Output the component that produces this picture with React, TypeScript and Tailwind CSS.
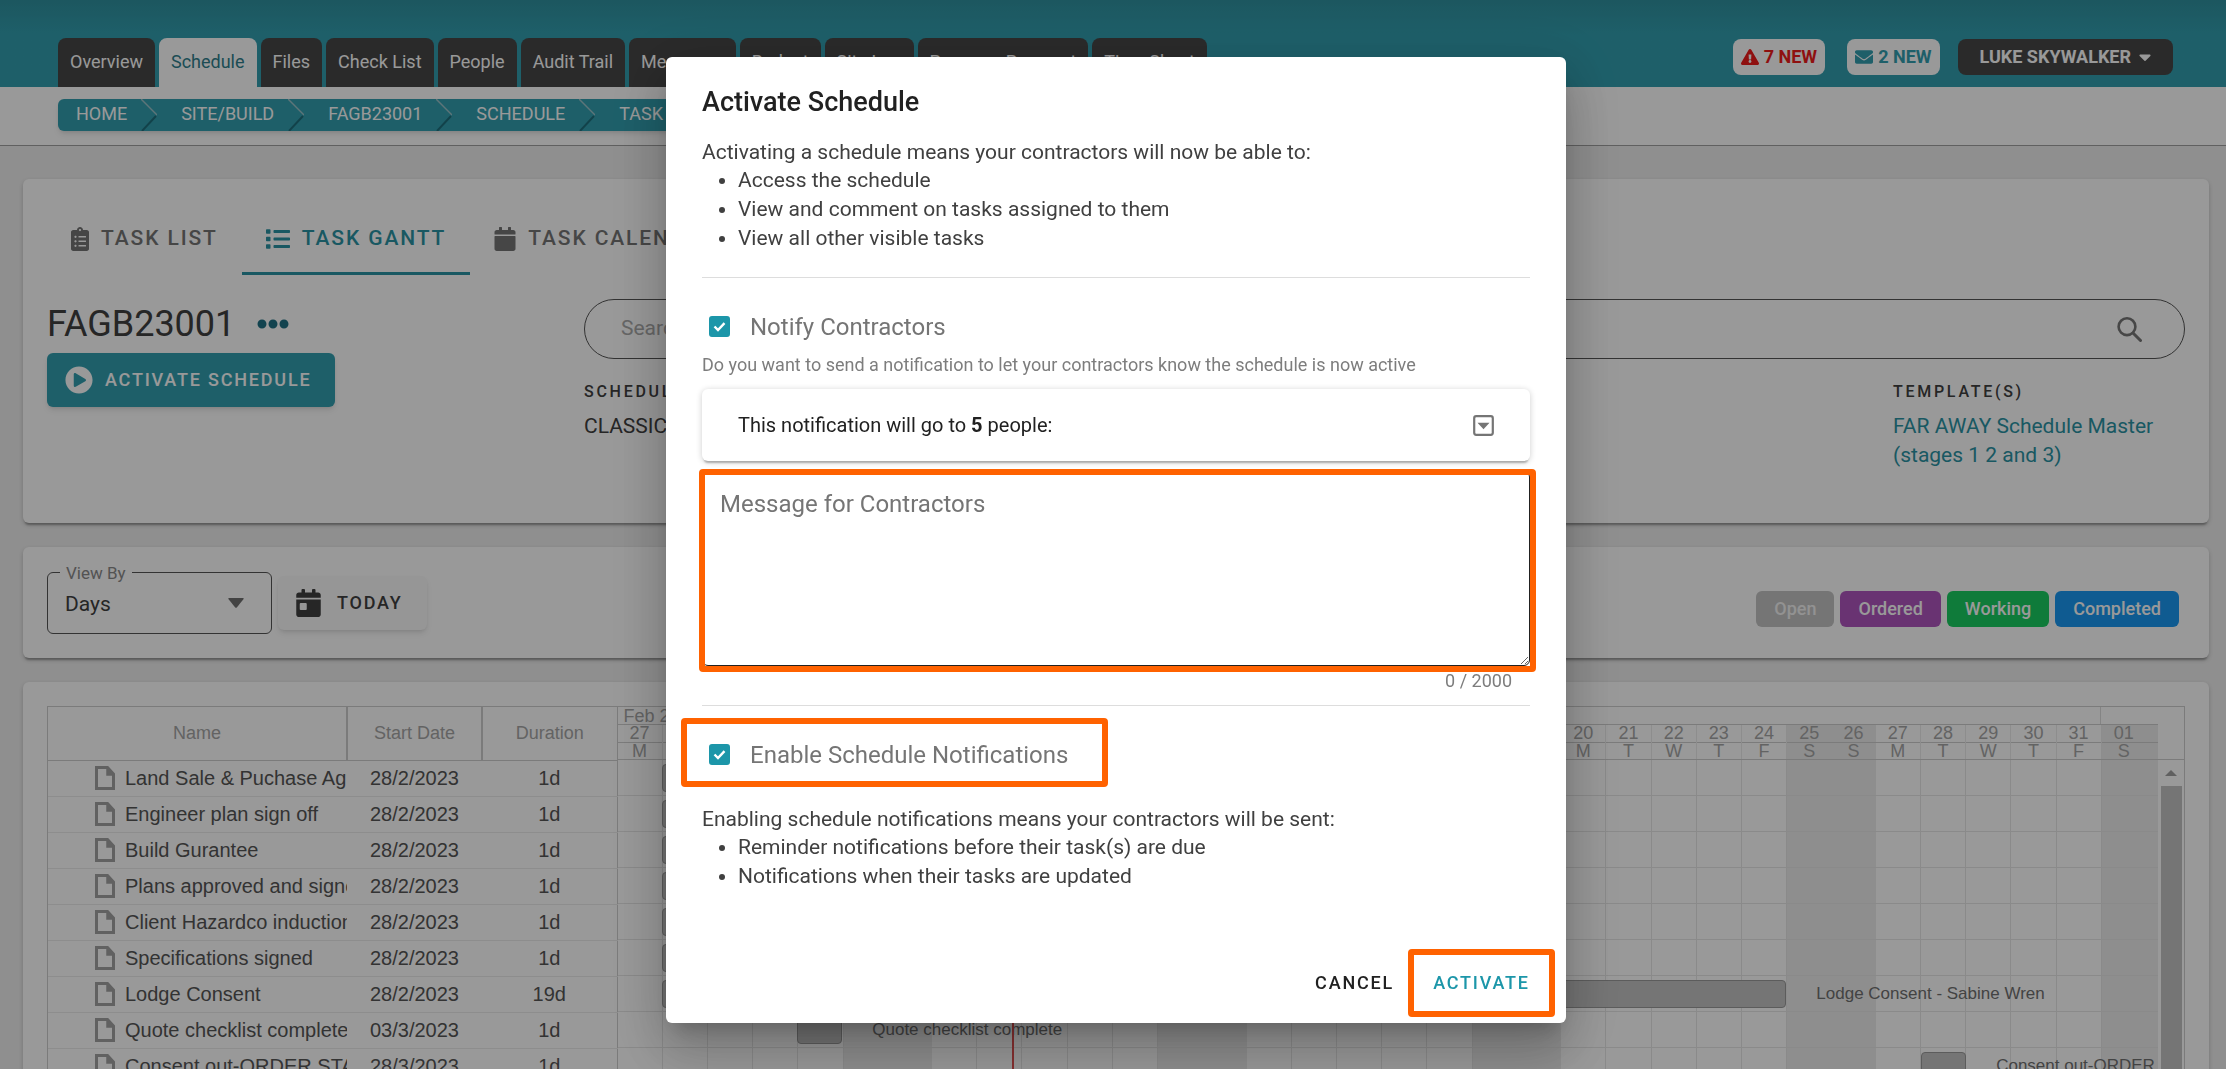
import { useState } from 'react'
import type { ReactNode } from 'react'
import {
  FaCalendar,
  FaCalendarDay,
  FaCaretDown,
  FaClipboardList,
  FaEllipsisH,
  FaEnvelope,
  FaExclamationTriangle,
  FaList,
  FaPlayCircle,
} from 'react-icons/fa'

const TABS = [
  'Overview', 'Schedule', 'Files', 'Check List', 'People', 'Audit Trail',
  'Messages', 'Budget', 'Site Log', 'Progress Payment', 'Time Sheet',
]

const CRUMBS = ['HOME', 'SITE/BUILD', 'FAGB23001', 'SCHEDULE', 'TASK GANTT']

const STATUSES = [
  { label: 'Open', className: 'bg-[#c3c3c3] text-[#f4f4f4]' },
  { label: 'Ordered', className: 'bg-[#b056be] text-white' },
  { label: 'Working', className: 'bg-[#19cd62] text-white' },
  { label: 'Completed', className: 'bg-[#1998f2] text-white' },
]

interface Task {
  name: string
  start: string
  duration: string
  /** Column of the first day, 0 = 27 Feb. */
  from: number
  /** Calendar days covered by the bar. */
  days: number
  label: string
}

const TASKS: Task[] = [
  { name: 'Land Sale & Puchase Agreement', start: '28/2/2023', duration: '1d', from: 1, days: 1, label: 'Land Sale & Puchase Agreement' },
  { name: 'Engineer plan sign off', start: '28/2/2023', duration: '1d', from: 1, days: 1, label: 'Engineer plan sign off' },
  { name: 'Build Gurantee', start: '28/2/2023', duration: '1d', from: 1, days: 1, label: 'Build Gurantee' },
  { name: 'Plans approved and signed', start: '28/2/2023', duration: '1d', from: 1, days: 1, label: 'Plans approved and signed' },
  { name: 'Client Hazardco induction', start: '28/2/2023', duration: '1d', from: 1, days: 1, label: 'Client Hazardco induction' },
  { name: 'Specifications signed', start: '28/2/2023', duration: '1d', from: 1, days: 1, label: 'Specifications signed' },
  { name: 'Lodge Consent', start: '28/2/2023', duration: '19d', from: 1, days: 25, label: 'Lodge Consent - Sabine Wren' },
  { name: 'Quote checklist complete', start: '03/3/2023', duration: '1d', from: 4, days: 1, label: 'Quote checklist complete' },
  { name: 'Consent out-ORDER STAGE 1', start: '28/3/2023', duration: '1d', from: 29, days: 1, label: 'Consent out-ORDER STAGE 1' },
]

// 27 Feb to 1 Apr
const DAYS = Array.from({ length: 34 }, (_, i) => {
  const d = new Date(2023, 1, 27 + i)
  return {
    date: String(d.getDate()).padStart(2, '0'),
    letter: 'SMTWTFS'[d.getDay()],
    weekend: d.getDay() === 0 || d.getDay() === 6,
  }
})

const TODAY_COLUMN = 8.78

function pct(columns: number): string {
  return `${(columns / DAYS.length) * 100}%`
}

export default function App() {
  const [open, setOpen] = useState(true)

  return (
    <div className="h-screen overflow-hidden bg-[#eeeeee] font-['Roboto',sans-serif] text-[#404040]">
      <Header />
      <Breadcrumbs />
      <main className="flex flex-col gap-6 pt-[33px] pr-[17px] pl-[23px]">
        <SchedulePanel onActivate={() => setOpen(true)} />
        <Toolbar />
        <Gantt />
      </main>
      {open && <ActivateDialog onClose={() => setOpen(false)} />}
    </div>
  )
}

function Header() {
  return (
    <header className="flex h-[87px] items-end justify-between bg-linear-to-b from-[#30919f] to-[#329fb0] to-40% pr-[53px] pl-[58px]">
      <nav className="flex gap-1">
        {TABS.map((tab) => (
          <a
            key={tab}
            href="#"
            className={
              tab === 'Schedule'
                ? 'h-[49px] rounded-t-lg bg-white px-3 pt-2.5 text-lg text-[#2f7f8d]'
                : 'h-[49px] rounded-t-lg bg-[#474747] px-3 pt-2.5 text-lg text-white'
            }
          >
            {tab}
          </a>
        ))}
      </nav>
      <div className="flex pb-3 text-lg font-bold">
        <button type="button" className="mr-[22px] flex h-9 items-center gap-[5px] rounded-lg bg-white px-2 text-[#ee1c1c]">
          <FaExclamationTriangle className="h-[18px] w-[18px]" />
          7 NEW
        </button>
        <button type="button" className="mr-[18px] flex h-9 items-center gap-[5px] rounded-lg bg-white px-2 text-[#329fb0]">
          <FaEnvelope className="h-[18px] w-[18px]" />
          2 NEW
        </button>
        <button type="button" className="flex h-9 items-center gap-2 rounded-lg bg-[#474747] px-[22px] text-white">
          LUKE SKYWALKER
          <FaCaretDown className="h-5 w-3" />
        </button>
      </div>
    </header>
  )
}

function Breadcrumbs() {
  return (
    <div className="flex h-[59px] items-start border-b border-[#a0a0a0] bg-white pt-3 pl-[58px]">
      <nav aria-label="Breadcrumb" className="flex h-8 items-center rounded-md bg-[#329fb0] px-[18px] text-lg text-white shadow-md">
        {CRUMBS.map((crumb, i) => (
          <span key={crumb} className="flex items-center">
            {i > 0 && (
              <svg className="mr-6 ml-3.5 h-8 w-4" viewBox="0 0 16 32" fill="none">
                <path d="M0 0L16 16" stroke="#9bc3ca" strokeWidth={1.5} />
                <path d="M15 17L1 32" stroke="#1f6f7c" strokeWidth={2} />
              </svg>
            )}
            <a href="#" className="pb-0.5">{crumb}</a>
          </span>
        ))}
      </nav>
    </div>
  )
}

function Card({ className, children }: { className: string; children: ReactNode }) {
  return (
    <section className={`rounded-md bg-white shadow-[0_4px_2px_-2px_rgba(0,0,0,0.25),0_2px_4px_rgba(0,0,0,0.2)] ${className}`}>
      {children}
    </section>
  )
}

function SchedulePanel({ onActivate }: { onActivate: () => void }) {
  return (
    <Card className="h-[344px] px-6 pt-[27px]">
      <nav className="flex text-[21px] font-medium tracking-[0.09em] text-[#757575]">
        <a href="#" className="flex h-[69px] items-center gap-3 border-b-3 border-transparent px-6">
          <FaClipboardList className="h-6 w-[18px]" />
          TASK LIST
        </a>
        <a href="#" className="flex h-[69px] items-center gap-3 border-b-3 border-[#2b93a4] px-6 text-[#2b93a4]">
          <FaList className="h-6 w-6" />
          TASK GANTT
        </a>
        <a href="#" className="flex h-[69px] items-center gap-3 border-b-3 border-transparent px-6">
          <FaCalendar className="h-6 w-[22px]" />
          TASK CALENDAR
        </a>
      </nav>
      <div className="flex pt-6">
        <div className="w-[537px] shrink-0">
          <div className="flex h-12 items-center gap-[22px] pt-0.5">
            <h1 className="text-4xl">FAGB23001</h1>
            <button type="button" aria-label="More" className="text-[#1f7184]">
              <FaEllipsisH className="h-8 w-8" />
            </button>
          </div>
          <button
            type="button"
            onClick={onActivate}
            className="mt-1.5 flex h-[54px] items-center gap-3 rounded-md bg-[#329fb0] pr-6 pl-[18px] text-lg font-medium tracking-widest text-white shadow-md"
          >
            <FaPlayCircle className="h-7 w-7" />
            ACTIVATE SCHEDULE
          </button>
        </div>
        <div className="flex-1">
          <label className="flex h-[60px] items-center rounded-full border border-[#555555] pr-[42px] pl-9">
            <span className="sr-only">Search</span>
            <input type="search" placeholder="Search" className="flex-1 text-[21px] outline-none placeholder:text-[#aaaaaa]" />
            <SearchIcon />
          </label>
          <div className="flex justify-between pt-[21px] text-[21px]/[29px]">
            <div>
              <h2 className="text-base/6 font-medium tracking-[0.17em]">SCHEDULE TYPE</h2>
              <p className="pt-2">CLASSIC</p>
            </div>
            <div className="w-[292px]">
              <h2 className="text-base/6 font-medium tracking-[0.17em]">TEMPLATE(S)</h2>
              <a href="#" className="block pt-2 text-[#2b93a4]">FAR AWAY Schedule Master (stages 1 2 and 3)</a>
            </div>
          </div>
        </div>
      </div>
    </Card>
  )
}

function Toolbar() {
  return (
    <Card className="flex h-[111px] items-center justify-between pr-[30px] pl-6">
      <div className="flex items-center gap-1.5">
        <div className="relative flex h-[62px] w-[225px] items-center rounded-md border border-[#555555]">
          <label htmlFor="view-by" className="absolute -top-3 left-3 bg-white px-1.5 text-[17px]/6 text-[#8a8a8a]">
            View By
          </label>
          <select id="view-by" className="w-full appearance-none px-[17px] pt-1 text-[21px] outline-none">
            <option>Days</option>
            <option>Weeks</option>
            <option>Months</option>
          </select>
          <svg className="pointer-events-none absolute right-[27px] h-2.5 w-4" viewBox="0 0 16 10" fill="#707070">
            <path d="M1 0h14q1 0 .6 1L9 9.300q-1 1-2 0L.4 1Q0 0 1 0z" />
          </svg>
        </div>
        <button
          type="button"
          className="flex h-[54px] items-center gap-4 rounded-md bg-[#fafafa] pr-6 pl-[18px] text-lg font-medium tracking-widest shadow-md"
        >
          <FaCalendarDay className="h-7 w-[25px]" />
          TODAY
        </button>
      </div>
      <div className="flex gap-1.5 pt-3">
        {STATUSES.map((s) => (
          <button key={s.label} type="button" className={`h-9 rounded-md px-[18px] text-lg font-medium ${s.className}`}>
            {s.label}
          </button>
        ))}
      </div>
    </Card>
  )
}

function Gantt() {
  return (
    <Card className="px-6 py-6">
      <div className="flex border border-[#cecece] font-['Liberation_Sans',Arial,sans-serif]">
        <table className="w-[569px] shrink-0 table-fixed border-r border-[#cecece]">
          <thead>
            <tr className="h-[53px] border-b border-[#cecece] text-lg text-[#a6a6a6]">
              <th className="w-[299px] border-r-2 border-[#cecece] font-normal">Name</th>
              <th className="w-[135px] border-r-2 border-[#cecece] font-normal">Start Date</th>
              <th className="w-[135px] font-normal">Duration</th>
            </tr>
          </thead>
          <tbody>
            {TASKS.map((task) => (
              <tr key={task.name} className="h-9 border-b border-[#ebebeb] text-xl text-[#555555]">
                <td className="overflow-hidden whitespace-nowrap">
                  <div className="flex items-center gap-2.5 pl-[47px]">
                    <FileIcon />
                    {task.name}
                  </div>
                </td>
                <td className="text-center">{task.start}</td>
                <td className="text-center">{task.duration}</td>
              </tr>
            ))}
          </tbody>
        </table>
        <Timeline />
        <div className="flex w-[26px] flex-col items-center">
          <div className="h-[53px] w-full border-b border-[#cecece]" />
          <svg className="my-2.5 h-1.5 w-3" viewBox="0 0 12 6" fill="#a0a0a0">
            <path d="M6 0l6 6H0z" />
          </svg>
          <div className="w-[21px] flex-1 bg-[#c3c3c3]" />
        </div>
      </div>
    </Card>
  )
}

function Timeline() {
  return (
    <div className="relative min-w-0 flex-1 overflow-hidden">
      <div className="flex h-[18px] border-b border-[#cecece] pr-3 text-lg/[18px] text-[#a6a6a6]">
        <div className="flex-2 border-r border-[#dddddd] pl-1.5 whitespace-nowrap">Feb 2023</div>
        <div className="flex-31 border-r border-[#dddddd] pl-1.5">Mar 2023</div>
        <div className="flex-1" />
      </div>
      <div className="flex h-[35px] border-b border-[#cecece] text-center text-lg/[17px] text-[#a6a6a6]">
        {DAYS.map((day, i) => (
          <div key={i} className={`flex-1 ${day.weekend ? 'bg-[#ededed]' : 'border-r border-[#ebebeb]'}`}>
            <div className="border-b border-[#cecece]">{day.date}</div>
            <div>{day.letter}</div>
          </div>
        ))}
        <div className="w-3 bg-[#ededed]">
          <div className="h-[18px] border-b border-[#cecece]" />
        </div>
      </div>
      <div className="relative">
        {TASKS.map((task) => (
          <div key={task.name} className="flex h-9 border-b border-[#e6e6e6]">
            <div className="relative flex flex-1">
              {DAYS.map((day, i) => (
                <div key={i} className={`flex-1 ${day.weekend ? 'bg-[#ededed]' : 'border-r border-[#e6e6e6]'}`} />
              ))}
              <div
                className="absolute top-1 h-7 rounded-sm border border-[#9a9a9a] bg-[#c3c3c3]"
                style={{ left: pct(task.from), width: pct(task.days) }}
              />
              <span
                className="absolute top-1 pl-[30px] text-[17px]/7 whitespace-nowrap text-[#707070]"
                style={{ left: pct(task.from + task.days) }}
              >
                {task.label}
              </span>
            </div>
            <div className="w-3 bg-[#ededed]" />
          </div>
        ))}
        <div className="absolute inset-y-0 right-3 left-0">
          <div className="absolute inset-y-0 w-0.5 bg-[#e05050]" style={{ left: pct(TODAY_COLUMN) }} />
        </div>
      </div>
    </div>
  )
}

function ActivateDialog({ onClose }: { onClose: () => void }) {
  const [message, setMessage] = useState('')

  return (
    <div className="fixed inset-0 flex items-start justify-center bg-black/40 pt-[57px] pl-1.5">
      <div
        role="dialog"
        aria-modal="true"
        aria-labelledby="activate-title"
        className="w-[900px] rounded-md bg-white px-9 pt-[25px] pb-1.5 text-[21px]/[29px] text-[#404040] shadow-[0_14px_19px_-9px_rgba(0,0,0,0.2),0_31px_49px_4px_rgba(0,0,0,0.14),0_12px_59px_10px_rgba(0,0,0,0.12)]"
      >
        <h2 id="activate-title" className="text-[27px]/10 font-medium text-[#212121]">
          Activate Schedule
        </h2>
        <p className="pt-4 leading-7">Activating a schedule means your contractors will now be able to:</p>
        <ul className="list-disc pl-9">
          <li>Access the schedule</li>
          <li>View and comment on tasks assigned to them</li>
          <li>View all other visible tasks</li>
        </ul>
        <hr className="mt-6 border-[#dddddd]" />

        <div className="pt-8 pl-[7px]">
          <Checkbox id="notify" label="Notify Contractors" />
        </div>
        <p className="pt-1.5 text-lg/8 text-[#7d7d7d]">
          Do you want to send a notification to let your contractors know the schedule is now active
        </p>
        <button
          type="button"
          className="mt-2 flex h-[72px] w-full items-center justify-between rounded-md px-9 text-xl text-[#212121] shadow-[0_4px_2px_-2px_rgba(0,0,0,0.25),0_1px_6px_rgba(0,0,0,0.2)]"
        >
          <span>
            This notification will go to <b>5</b> people:
          </span>
          <svg className="h-[21px] w-[21px]" viewBox="0 0 21 21" fill="none">
            <rect x="1.200" y="1.200" width="18.600" height="18.600" rx="2" stroke="#757575" strokeWidth={2.2} />
            <path d="M4.500 7.800h12l-6 6.500z" fill="#757575" />
          </svg>
        </button>

        <div className="relative mt-2.5">
          <textarea
            aria-label="Message for Contractors"
            placeholder="Message for Contractors"
            maxLength={2000}
            value={message}
            onChange={(e) => setMessage(e.target.value)}
            className="block h-[195px] w-full rounded-md border border-[#212121] px-[17px] py-4 text-2xl outline-none placeholder:text-[#757575]"
          />
          <Highlight className="-top-0.5 -right-1.5 -bottom-1.5 -left-[3px]" />
        </div>
        <div className="pr-[18px] pb-2.5 text-right text-lg/[29px] text-[#7d7d7d]">{message.length} / 2000</div>
        <hr className="border-[#dddddd]" />

        <div className="flex pt-8 pl-[7px]">
          <div className="relative">
            <Checkbox id="enable" label="Enable Schedule Notifications" />
            <Highlight className="-top-5 -right-10 -bottom-4 -left-7" />
          </div>
        </div>
        <p className="pt-[34px] leading-7">Enabling schedule notifications means your contractors will be sent:</p>
        <ul className="list-disc pl-9">
          <li>Reminder notifications before their task(s) are due</li>
          <li>Notifications when their tasks are updated</li>
        </ul>
        <div className="-mr-[25px] flex justify-end pt-[58px]">
          <button type="button" onClick={onClose} className="px-3.5 text-lg font-medium tracking-widest text-[#212121]">
            CANCEL
          </button>
          <div className="relative flex h-[68px] w-[147px] justify-center">
            <button type="button" onClick={onClose} className="w-full text-lg font-medium tracking-widest text-[#1c96a9]">
              ACTIVATE
            </button>
            <Highlight className="inset-0" />
          </div>
        </div>
      </div>
    </div>
  )
}

function Checkbox({ id, label }: { id: string; label: string }) {
  return (
    <div className="flex h-[33px] items-center gap-5">
      <span className="relative flex">
        <input
          id={id}
          type="checkbox"
          defaultChecked
          className="peer h-[21px] w-[21px] appearance-none rounded-[3px] border-2 border-[#757575] checked:border-[#1c96a9] checked:bg-[#1c96a9]"
        />
        <svg className="pointer-events-none absolute inset-0 hidden peer-checked:block" viewBox="0 0 21 21" fill="none">
          <path d="M5.500 10.500l3.500 3.500 6.500-6.800" stroke="white" strokeWidth={2.4} />
        </svg>
      </span>
      <label htmlFor={id} className="text-2xl text-[#757575]">
        {label}
      </label>
    </div>
  )
}

function Highlight({ className }: { className: string }) {
  return <div className={`pointer-events-none absolute rounded-sm border-6 border-[#ff6200] ${className}`} />
}

function SearchIcon() {
  return (
    <svg className="h-[25px] w-[25px]" viewBox="0 0 25 25" fill="none" stroke="#777777">
      <circle cx="10" cy="9.700" r="8.400" strokeWidth={2.6} />
      <path d="M16 16l7.500 7.500" strokeWidth={3} strokeLinecap="round" />
    </svg>
  )
}

function FileIcon() {
  return (
    <svg className="h-6 w-5 shrink-0" viewBox="0 0 20 24" fill="none">
      <path d="M1.500 1.500h11l6 6.500v14.500h-17z" stroke="#a2a2a2" strokeWidth={3} />
      <path d="M12 2v7h7" fill="#a2a2a2" stroke="#a2a2a2" strokeWidth={1.5} />
    </svg>
  )
}
